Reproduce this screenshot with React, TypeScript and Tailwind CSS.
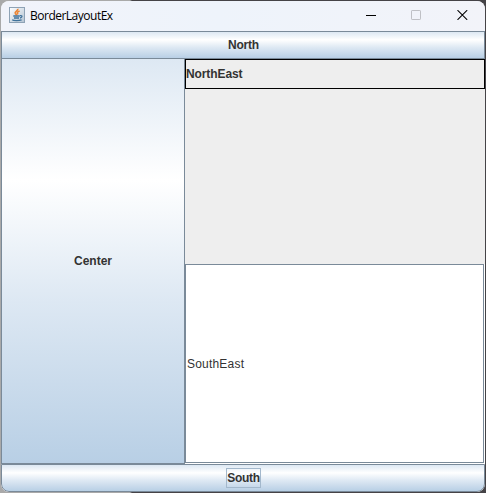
import type { ReactNode } from "react";

const metal =
  "bg-[linear-gradient(to_bottom,#dde8f3_0%,#ffffff_30%,#dde8f3_60%,#b8cfe5_100%)] border-[#7a8a99] text-[#333333] font-bold flex items-center justify-center";

function MetalButton({ className, children }: { className: string; children: ReactNode }) {
  return <button className={`${metal} ${className}`}>{children}</button>;
}

function JavaIcon() {
  return (
    <svg width="16" height="16" viewBox="0 0 16 16" fill="none">
      <defs>
        <linearGradient id="tile" x1="0" y1="0" x2="1" y2="1">
          <stop offset="0" stopColor="#ffffff" />
          <stop offset="1" stopColor="#b3c3d2" />
        </linearGradient>
      </defs>
      <rect x="0.5" y="0.5" width="15" height="15" fill="url(#tile)" stroke="#8ea2b5" />
      <path d="M8.8 1.8C9.6 3.8 5 4.4 6.3 6.4L7.8 8.2M10.6 4C7.6 5.2 8.2 6 8.9 7.4" stroke="#ec8432" strokeWidth="1.6" />
      <path d="M4.3 9H10.8M5 11H10M3.2 12.8C4.4 13.8 10 13.8 12.6 12.8M11 8.6C14 8.3 13.2 10.5 11 11" stroke="#3f729b" strokeWidth="1.3" />
    </svg>
  );
}

function TitleBar() {
  return (
    <header className="flex h-[30px] shrink-0 items-center bg-[linear-gradient(to_right,#f1f3fa,#eef3fb_45%,#f2f3f9)] pb-[2px] pl-2 font-['Open_Sans','Noto_Sans',sans-serif] text-[12px] text-black">
      <JavaIcon />
      <span className="ml-[5px] w-[84px] whitespace-nowrap pt-px text-[12px] tracking-[-0.5px]">BorderLayoutEx</span>
      <div className="ml-auto flex items-center pr-[17px]">
        <svg width="10" height="10" viewBox="0 0 10 10" shapeRendering="crispEdges">
          <path d="M0 5.5H10" stroke="#000" />
        </svg>
        <svg className="ml-[35px]" width="10" height="10" viewBox="0 0 10 10" fill="none">
          <rect x="0.5" y="0.5" width="9" height="9" rx="0.6" stroke="#bfc0c5" />
        </svg>
        <svg className="ml-9" width="11" height="10" viewBox="0 0 11 10">
          <path d="M0.5 0.2L10.2 9.8M10.2 0.2L0.5 9.8" stroke="#000" strokeWidth="1.1" />
        </svg>
      </div>
    </header>
  );
}

export default function App() {
  return (
    <div className="h-[493px] w-[486px] overflow-hidden bg-[linear-gradient(to_right,#a9a9a9_130px,#454347_132px)] p-px font-['Liberation_Sans',Arial,sans-serif] text-[12px]">
      <div className="flex h-[491px] w-[484px] flex-col overflow-hidden rounded-lg bg-[#eeeeee]">
        <TitleBar />
        <MetalButton className="h-[28px] shrink-0 border pl-px tracking-[-0.2px]">North</MetalButton>
        <main className="flex h-[405px] shrink-0">
          <MetalButton className="w-[184px] shrink-0 border-x border-b">Center</MetalButton>
          <section className="flex w-[300px] flex-col justify-between">
            <div className="flex h-[30px] items-center border border-black font-bold tracking-[-0.1px] text-[#333333]">NorthEast</div>
            <div className="h-[200px] bg-white pr-px pb-px">
              <div className="flex h-full items-center border border-[#7a8a99] pl-px tracking-[0.2px] text-[#333333]">SouthEast</div>
            </div>
          </section>
        </main>
        <MetalButton className="h-[28px] shrink-0 rounded-b-lg border">
          <span className="flex h-[20px] w-[35px] items-center justify-center border border-[#a3b8cc] pl-px tracking-[-0.3px]">South</span>
        </MetalButton>
      </div>
    </div>
  );
}
